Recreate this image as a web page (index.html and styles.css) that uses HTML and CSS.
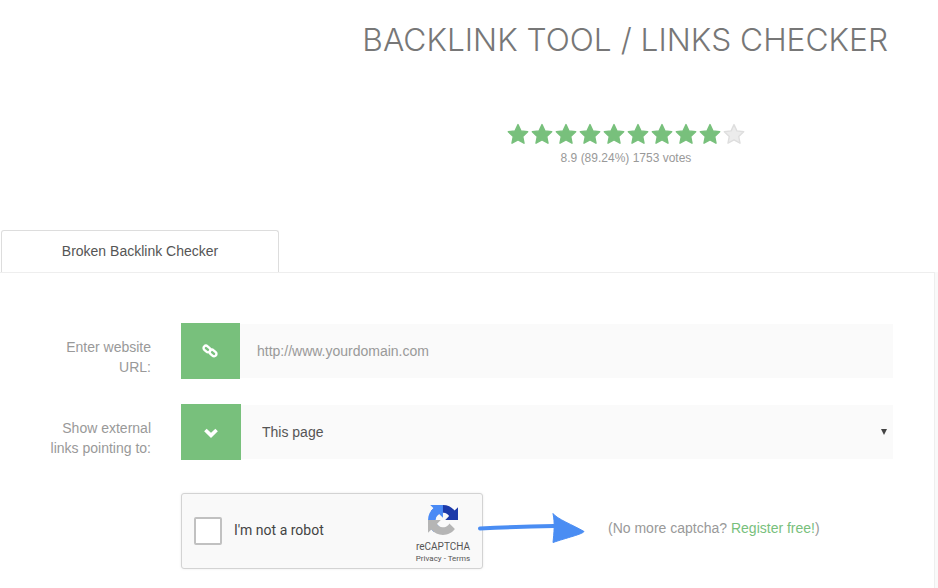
FILE: index.html
```html
<!DOCTYPE html>
<html lang="en">
<head>
<meta charset="utf-8">
<title>Backlink Tool / Links Checker</title>
<link rel="stylesheet" href="styles.css">
</head>
<body>
<svg class="defs" width="0" height="0" aria-hidden="true">
  <symbol id="star" viewBox="0 0 24 24">
    <path d="M12 2.6l2.9 6.3 6.8.8-5 4.7 1.3 6.8-6-3.4-6 3.4 1.3-6.8-5-4.7 6.8-.8z"/>
  </symbol>
</svg>
<header class="head">
  <h1 class="title">BACKLINK TOOL / LINKS CHECKER</h1>
  <div class="rating">
    <div class="stars">
      <svg class="star"><use href="#star"/></svg>
      <svg class="star"><use href="#star"/></svg>
      <svg class="star"><use href="#star"/></svg>
      <svg class="star"><use href="#star"/></svg>
      <svg class="star"><use href="#star"/></svg>
      <svg class="star"><use href="#star"/></svg>
      <svg class="star"><use href="#star"/></svg>
      <svg class="star"><use href="#star"/></svg>
      <svg class="star"><use href="#star"/></svg>
      <svg class="star star-off"><use href="#star"/></svg>
    </div>
    <div class="votes">8.9 (89.24%) 1753 votes</div>
  </div>
</header>
<div class="tab">Broken Backlink Checker</div>
<main class="panel">
  <div class="row">
    <label class="label" for="url">Enter website URL:</label>
    <div class="addon addon-link">
      <svg class="icon-link" width="16" height="16" viewBox="0 0 16 16" fill="none" stroke="#fff" stroke-width="2.4">
        <rect x="1.2" y="3.6" width="7.6" height="4.8" rx="2.4" transform="rotate(42 5 6)"/>
        <rect x="7.2" y="7.6" width="7.6" height="4.8" rx="2.4" transform="rotate(42 11 10)"/>
      </svg>
    </div>
    <input class="field field-url" id="url" type="text" placeholder="http://www.yourdomain.com">
  </div>
  <div class="row">
    <label class="label" for="scope">Show external links pointing to:</label>
    <div class="addon addon-chevron">
      <svg class="icon-chevron" width="14" height="10" viewBox="0 0 14 10" fill="none" stroke="#fff" stroke-width="3.6">
        <path d="M1.4 2l5.6 5.4L12.6 2"/>
      </svg>
    </div>
    <div class="select-wrap">
      <select class="field field-select" id="scope">
        <option>This page</option>
      </select>
      <span class="caret"></span>
    </div>
  </div>
  <div class="captcha-row">
    <div class="captcha">
      <span class="checkbox"></span>
      <span class="robot">I'm not a robot</span>
      <div class="brand">
        <svg class="logo" width="30" height="30" viewBox="0 0 64 64">
          <path fill="#1c3aa9" d="M64 31.955l-.033-1.37V4.687l-7.16 7.16C50.948 4.674 42.033.093 32.05.093c-10.4 0-19.622 4.96-25.458 12.64l11.736 11.86a15.55 15.55 0 0 1 4.75-5.33c2.05-1.6 4.952-2.906 8.972-2.906.486 0 .86.057 1.136.163 4.982.393 9.3 3.14 11.85 7.12l-8.3 8.3c10.514-.04 22.393-.066 27.93.014"/>
          <path fill="#4a8af5" d="M31.955.002l-1.37.033H4.687l7.16 7.16C4.674 13.05.093 21.966.093 31.95c0 10.4 4.96 19.622 12.64 25.458l11.86-11.736a15.55 15.55 0 0 1-5.33-4.75c-1.6-2.05-2.906-4.952-2.906-8.972 0-.486.057-.86.163-1.136.393-4.982 3.14-9.3 7.12-11.85l8.3 8.3c-.04-10.514-.066-22.393.014-27.93"/>
          <path fill="#b5b5b5" d="M.002 31.95l.033 1.37v25.9l7.16-7.16c5.857 7.173 14.772 11.754 24.755 11.754 10.4 0 19.622-4.96 25.458-12.64l-11.736-11.86a15.55 15.55 0 0 1-4.75 5.33c-2.05 1.6-4.952 2.906-8.972 2.906-.486 0-.86-.057-1.136-.163-4.982-.393-9.3-3.14-11.85-7.12l8.3-8.3c-10.514.04-22.393.066-27.93-.014"/>
        </svg>
        <div class="brand-name">reCAPTCHA</div>
        <div class="brand-links">Privacy - Terms</div>
      </div>
    </div>
    <svg class="arrow" width="108" height="32" viewBox="0 0 108 32">
      <path d="M2 16.500Q40 14.500 76 14" fill="none" stroke="#4a8df3" stroke-width="4" stroke-linecap="round"/>
      <path fill="#4a8df3" stroke="#4a8df3" stroke-linejoin="round" d="M75 1.500C79 7 95 13 106 19.500 105 22 88 26 75 30.500 76 21 77 11 75 1.500z"/>
    </svg>
    <p class="promo">(No more captcha? <a class="promo-link" href="#">Register free!</a>)</p>
  </div>
</main>
</body>
</html>
```

FILE: styles.css
```css
html, body {
  margin: 0;
  padding: 0;
  height: 100%;
  overflow: hidden;
  background: #fff;
}
body {
  display: flex;
  flex-direction: column;
  font-family: "Liberation Sans", Arial, sans-serif;
  font-size: 14px;
  color: #999;
}
.defs {
  position: absolute;
}
.head {
  display: flex;
  flex-direction: column;
  padding-top: 20px;
}
.title {
  margin: 0;
  padding-right: 50px;
  text-align: right;
  font-family: Inter, "Open Sans", sans-serif;
  font-weight: 300;
  font-size: 31.7px;
  line-height: 40px;
  color: #777;
  white-space: nowrap;
}
.rating {
  margin: 62px 0 0 506px;
  width: 240px;
  display: flex;
  flex-direction: column;
  align-items: center;
}
.stars {
  display: flex;
  height: 24px;
}
.star {
  width: 24px;
  height: 24px;
  fill: #78c07c;
  stroke: #78c07c;
  stroke-width: 1.4;
  stroke-linejoin: round;
}
.star-off {
  fill: #ececec;
  stroke: #dedede;
}
.votes {
  margin-top: 4px;
  font-size: 12px;
  line-height: 16px;
  color: #999;
}
.tab {
  box-sizing: border-box;
  width: 278px;
  height: 42px;
  margin: 64px 0 0 1px;
  border: 1px solid #ddd;
  border-bottom: 0;
  border-radius: 3px 3px 0 0;
  text-align: center;
  line-height: 40px;
  color: #555;
  background: #fff;
}
.panel {
  box-sizing: border-box;
  flex: 1;
  min-height: 0;
  width: 935px;
  padding: 50px 41px 0 0;
  border-top: 1px solid #eee;
  border-right: 1px solid #eee;
  box-shadow: 3px 0 0 #f9f9f9;
  display: flex;
  flex-direction: column;
}
.row {
  display: flex;
  align-items: stretch;
  height: 56px;
  margin-bottom: 25px;
}
.label {
  box-sizing: border-box;
  width: 110px;
  margin: 14px 30px 0 41px;
  flex: none;
  text-align: right;
  line-height: 20px;
  color: #999;
}
.addon {
  flex: none;
  display: flex;
  align-items: center;
  justify-content: center;
  background: #78c07c;
}
.addon-link {
  width: 59px;
}
.addon-chevron {
  width: 60px;
}
.icon-link {
  margin-right: 1px;
}
.icon-chevron {
  margin-top: 2px;
}
.field {
  box-sizing: border-box;
  height: 54px;
  margin: 1px 0;
  border: 0;
  outline: 0;
  background: #fafafa;
  font-family: "Liberation Sans", Arial, sans-serif;
  font-size: 14px;
  color: #555;
}
.field-url {
  flex: 1;
  min-width: 0;
  padding: 0 17px;
}
.field-url::placeholder {
  color: #999;
  opacity: 1;
}
.select-wrap {
  flex: 1;
  position: relative;
  display: flex;
}
.field-select {
  flex: 1;
  padding: 0 21px;
  appearance: none;
  -webkit-appearance: none;
  border-radius: 0;
}
.caret {
  position: absolute;
  right: 6px;
  top: 25px;
  border-left: 3px solid transparent;
  border-right: 3px solid transparent;
  border-top: 6px solid #444;
}
.captcha-row {
  display: flex;
  align-items: flex-start;
  margin-top: 8px;
  padding-left: 181px;
}
.captcha {
  box-sizing: border-box;
  width: 302px;
  height: 76px;
  flex: none;
  display: flex;
  align-items: center;
  padding: 0 11px 0 12px;
  background: #f9f9f9;
  border: 1px solid #d3d3d3;
  border-radius: 3px;
  box-shadow: 0 0 3px rgba(0, 0, 0, .08);
}
.checkbox {
  box-sizing: border-box;
  width: 28px;
  height: 28px;
  flex: none;
  margin-bottom: 1px;
  background: #fff;
  border: 2px solid #c1c1c1;
  border-radius: 2px;
}
.robot {
  margin: 0 0 2px 12px;
  font-family: Roboto, sans-serif;
  font-size: 14px;
  color: #444;
}
.brand {
  margin-left: auto;
  width: 56px;
  display: flex;
  flex-direction: column;
  align-items: center;
  font-family: Roboto, sans-serif;
  color: #555;
  white-space: nowrap;
}
.logo {
  margin-top: 8px;
}
.brand-name {
  margin-top: 6px;
  font-size: 10px;
  line-height: 12px;
}
.brand-links {
  font-size: 8px;
  line-height: 12px;
  margin-bottom: 1px;
}
.arrow {
  flex: none;
  margin: 19px 0 0 -5px;
}
.promo {
  margin: 25px 0 0 22px;
  line-height: 20px;
  color: #999;
  white-space: nowrap;
}
.promo-link {
  color: #78c07c;
  text-decoration: none;
}
```
